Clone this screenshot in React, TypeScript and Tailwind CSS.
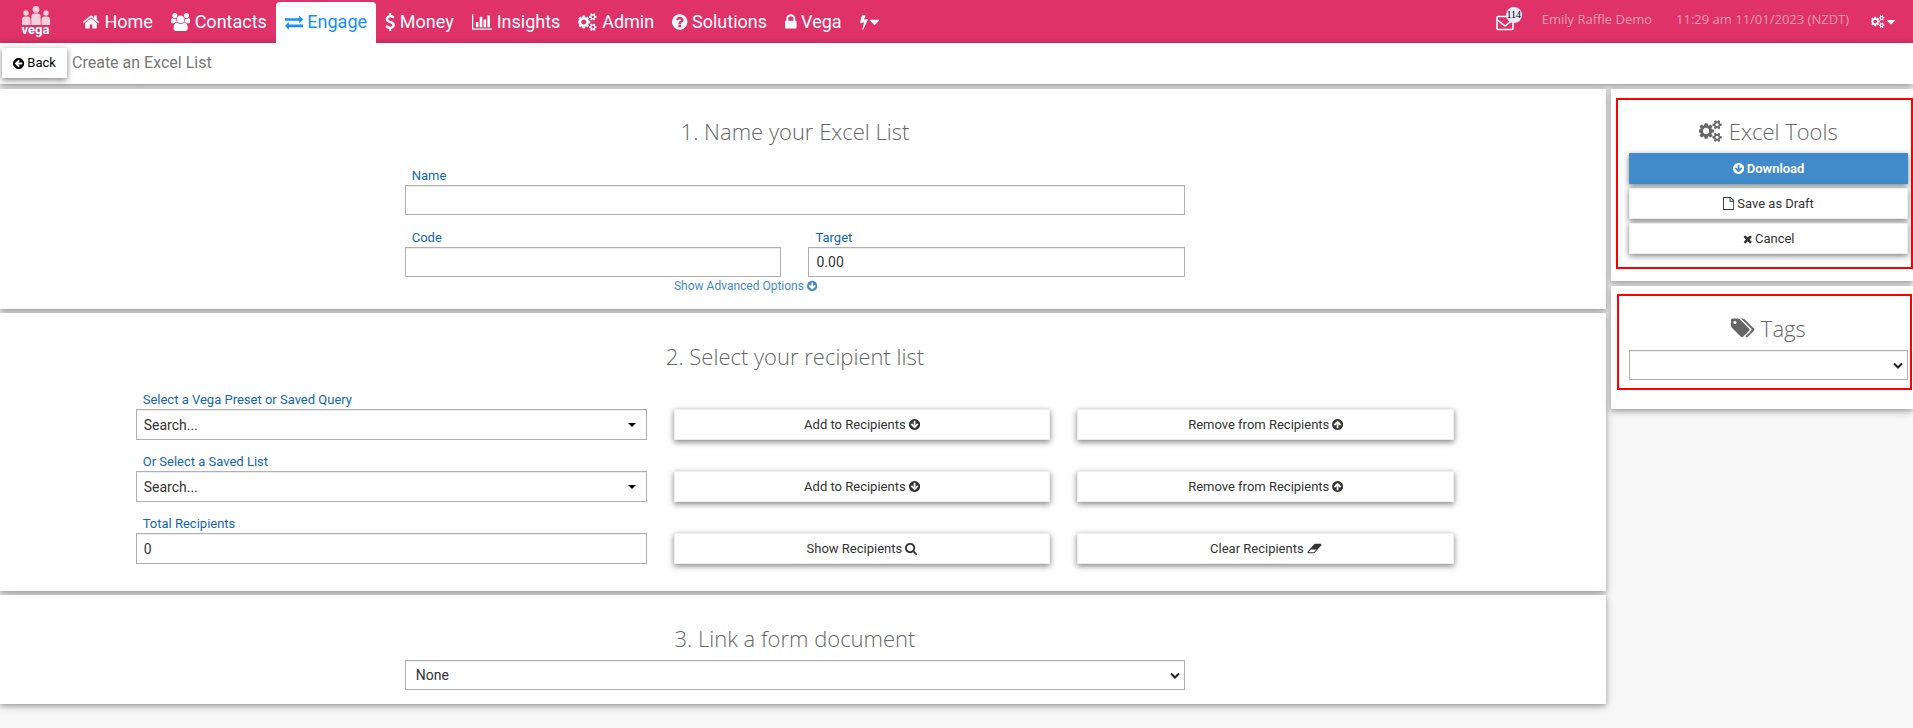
import React from "react";

type IconProps = { className?: string };

const icons = {
  home: { w: 1792, d: "M1472 992v480q0 26-19 45t-45 19h-384v-384h-256v384h-384q-26 0-45-19t-19-45v-480q0-1 .5-3t.5-3l575-474 575 474q1 2 1 6zm223-69l-62 74q-8 9-21 11h-3q-13 0-21-7l-692-577-692 577q-12 8-24 7-13-2-21-11l-62-74q-8-10-7-23.5t11-21.5l719-599q32-26 76-26t76 26l244 204v-195q0-14 9-23t23-9h192q14 0 23 9t9 23v408l219 182q10 8 11 21.5t-7 23.5z" },
  users: { x: -64, w: 1920, d: "M529 896q-162 5-265 128h-134q-82 0-138-40.5t-56-118.5q0-353 124-353 6 0 43.5 21t97.5 42.5 119 21.5q67 0 133-23-5 37-5 66 0 139 81 256zm1071 637q0 120-73 189.5t-194 69.5h-874q-121 0-194-69.5t-73-189.5q0-53 3.5-103.5t14-109 26.5-108.5 43-97.5 62-81 85.5-53.5 111.5-20q10 0 43 21.5t73 48 107 48 135 21.5 135-21.5 107-48 73-48 43-21.5q61 0 111.5 20t85.5 53.5 62 81 43 97.5 26.5 108.5 14 109 3.5 103.5zm-1024-1277q0 106-75 181t-181 75-181-75-75-181 75-181 181-75 181 75 75 181zm704 384q0 159-112.5 271.5t-271.5 112.5-271.5-112.5-112.5-271.5 112.5-271.5 271.5-112.5 271.5 112.5 112.5 271.5zm576 225q0 78-56 118.5t-138 40.5h-134q-103-123-265-128 81-117 81-256 0-29-5-66 66 23 133 23 59 0 119-21.5t97.5-42.5 43.5-21q124 0 124 353zm-128-609q0 106-75 181t-181 75-181-75-75-181 75-181 181-75 181 75 75 181z" },
  exchange: { w: 1792, d: "M1792 1184v192q0 13-9.5 22.5t-22.5 9.5h-1376v192q0 13-9.5 22.5t-22.5 9.5q-12 0-24-10l-319-320q-9-9-9-22 0-14 9-23l320-320q9-9 23-9 13 0 22.5 9.5t9.5 22.5v192h1376q13 0 22.5 9.5t9.5 22.5zm0-544q0 14-9 23l-320 320q-9 9-23 9-13 0-22.5-9.5t-9.5-22.5v-192h-1376q-13 0-22.5-9.5t-9.5-22.5v-192q0-13 9.5-22.5t22.5-9.5h1376v-192q0-14 9-23t23-9q12 0 24 10l319 319q9 9 9 23z" },
  dollar: { x: 384, w: 1024, d: "M1362 1185q0 153-99.5 263.5t-258.5 136.5v175q0 14-9 23t-23 9h-135q-13 0-22.5-9.5t-9.5-22.5v-175q-66-9-127.5-31t-101.5-44.5-74-48-46.5-37.5-17.5-18q-17-21-2-41l103-135q7-10 23-12 15-2 24 9l2 2q113 99 243 125 37 8 74 8 81 0 142.5-43t61.5-122q0-28-15-53t-33.5-42-58.5-37.5-66-32-80-32.5q-39-16-61.5-25t-61.5-26.5-62.5-31-56.5-35.5-53.5-42.5-43.5-49-35.5-58-21-66.5-8.5-78q0-138 98-242t255-134v-180q0-13 9.5-22.5t22.5-9.5h135q14 0 23 9t9 23v176q57 6 110.5 23t87 33.5 63.5 37.5 39 29 15 14q17 18 5 38l-81 146q-8 15-23 16-14 3-27-7-3-3-14.5-12t-39-26.5-58.5-32-74.5-26-85.5-11.5q-95 0-155 43t-60 111q0 26 8.5 48t29.5 41.5 39.5 33 56 31 60.5 27 70 27.5q53 20 81 31.5t76 35 75.5 42.5 62 50 53 63.5 31.5 76.5 13 94z" },
  chart: { w: 2048, d: "M640 896v512h-256v-512h256zm384-512v1024h-256v-1024h256zm1024 1152v128h-2048v-1536h128v1408h1920zm-640-896v768h-256v-768h256zm384-384v1152h-256v-1152h256z" },
  cogs: { w: 1920, d: "M832 896q0-106-75-181t-181-75-181 75-75 181 75 181 181 75 181-75 75-181zm768 512q0-52-38-90t-90-38-90 38-38 90q0 53 37.5 90.5t90.5 37.5 90.5-37.5 37.5-90.5zm0-1024q0-52-38-90t-90-38-90 38-38 90q0 53 37.5 90.5t90.5 37.5 90.5-37.5 37.5-90.5zm-384 421v185q0 10-7 19.5t-16 10.5l-155 24q-11 35-32 76 34 48 90 115 7 11 7 20 0 12-7 19-23 30-82.5 89.5t-78.5 59.5q-11 0-21-7l-115-90q-37 19-77 31-11 108-23 155-7 24-30 24h-186q-11 0-20-7.5t-10-17.5l-23-153q-34-10-75-31l-118 89q-7 7-20 7-11 0-21-8-144-133-144-160 0-9 7-19 10-14 41-53t47-61q-23-44-35-82l-152-24q-10-1-17-9.5t-7-19.5v-185q0-10 7-19.5t16-10.5l155-24q11-35 32-76-34-48-90-115-7-11-7-20 0-12 7-20 22-30 82-89t79-59q11 0 21 7l115 90q34-18 77-32 11-108 23-154 7-24 30-24h186q11 0 20 7.5t10 17.5l23 153q34 10 75 31l118-89q8-7 20-7 11 0 21 8 144 133 144 160 0 8-7 19-12 16-42 54t-45 60q23 48 34 82l152 23q10 2 17 10.5t7 19.5zm640 533v140q0 16-149 31-12 27-30 52 51 113 51 138 0 4-4 7-122 71-124 71-8 0-46-47t-52-68q-20 2-30 2t-30-2q-14 21-52 68t-46 47q-2 0-124-71-4-3-4-7 0-25 51-138-18-25-30-52-149-15-149-31v-140q0-16 149-31 13-29 30-52-51-113-51-138 0-4 4-7 4-2 35-20t59-34 30-16q8 0 46 46.5t52 67.5q20-2 30-2t30 2q51-71 92-112l6-2q4 0 124 70 4 3 4 7 0 25-51 138 17 23 30 52 149 15 149 31zm0-1024v140q0 16-149 31-12 27-30 52 51 113 51 138 0 4-4 7-122 71-124 71-8 0-46-47t-52-68q-20 2-30 2t-30-2q-14 21-52 68t-46 47q-2 0-124-71-4-3-4-7 0-25 51-138-18-25-30-52-149-15-149-31v-140q0-16 149-31 13-29 30-52-51-113-51-138 0-4 4-7 4-2 35-20t59-34 30-16q8 0 46 46.5t52 67.5q20-2 30-2t30 2q51-71 92-112l6-2q4 0 124 70 4 3 4 7 0 25-51 138 17 23 30 52 149 15 149 31z" },
  question: { x: 128, w: 1536, d: "M1024 1376v-192q0-14-9-23t-23-9h-192q-14 0-23 9t-9 23v192q0 14 9 23t23 9h192q14 0 23-9t9-23zm256-672q0-88-55.5-163t-138.5-116-170-41q-243 0-371 213-15 24 8 42l132 100q7 6 19 6 16 0 25-12 53-68 86-92 34-24 86-24 48 0 85.5 26t37.5 59q0 38-20 61t-68 45q-63 28-115.5 86.5t-52.5 125.5v36q0 14 9 23t23 9h192q14 0 23-9t9-23q0-19 21.5-49.5t54.5-49.5q32-18 49-28.5t46-35 44.5-48 28-60.5 12.5-81zm384 192q0 209-103 385.5t-279.5 279.5-385.5 103-385.5-103-279.5-279.5-103-385.5 103-385.5 279.5-279.5 385.5-103 385.5 103 279.5 279.5 103 385.5z" },
  lock: { x: 320, w: 1152, d: "M640 768h512v-192q0-106-75-181t-181-75-181 75-75 181v192zm832 96v576q0 40-28 68t-68 28h-960q-40 0-68-28t-28-68v-576q0-40 28-68t68-28h32v-192q0-184 132-316t316-132 316 132 132 316v192h32q40 0 68 28t28 68z" },
  bolt: { x: 448, w: 896, d: "M1333 566q18 20 7 44l-540 1157q-13 25-42 25-4 0-14-2-17-5-25.5-19t-4.5-30l197-808-406 101q-4 1-12 1-18 0-31-11-18-15-13-39l201-825q4-14 16-23t28-9h328q19 0 32 12.5t13 29.5q0 8-5 18l-171 463 396-98q8-2 12-2 19 0 34 15z" },
  caret: { x: 384, w: 1024, d: "M1408 704q0 26-19 45l-448 448q-19 19-45 19t-45-19l-448-448q-19-19-19-45t19-45 45-19h896q26 0 45 19t19 45z" },
  arrowDown: { x: 128, w: 1536, d: "M1412 897q0-27-18-45l-91-91q-18-18-45-18t-45 18l-189 189v-502q0-26-19-45t-45-19h-128q-26 0-45 19t-19 45v502l-189-189q-19-19-45-19t-45 19l-91 91q-18 18-18 45t18 45l362 362 91 91q18 18 45 18t45-18l91-91 362-362q18-18 18-45zm252-1q0 209-103 385.5t-279.5 279.5-385.5 103-385.5-103-279.5-279.5-103-385.5 103-385.5 279.5-279.5 385.5-103 385.5 103 279.5 279.5 103 385.5z" },
  times: { x: 192, w: 1408, d: "M1490 1322q0 40-28 68l-136 136q-28 28-68 28t-68-28l-294-294-294 294q-28 28-68 28t-68-28l-136-136q-28-28-28-68t28-68l294-294-294-294q-28-28-28-68t28-68l136-136q28-28 68-28t68 28l294 294 294-294q28-28 68-28t68 28l136 136q28 28 28 68t-28 68l-294 294 294 294q28 28 28 68z" },
  search: { x: 64, w: 1664, d: "M1216 832q0-185-131.5-316.5t-316.5-131.5-316.5 131.5-131.5 316.5 131.5 316.5 316.5 131.5 316.5-131.5 131.5-316.5zm512 832q0 52-38 90t-90 38q-54 0-90-38l-343-342q-179 124-399 124-143 0-273.5-55.5t-225-150-150-225-55.5-273.5 55.5-273.5 150-225 225-150 273.5-55.5 273.5 55.5 225 150 150 225 55.5 273.5q0 220-124 399l343 343q37 37 37 90z" },
  tags: { w: 1920, d: "M448 448q0-53-37.5-90.5t-90.5-37.5-90.5 37.5-37.5 90.5 37.5 90.5 90.5 37.5 90.5-37.5 37.5-90.5zm1067 576q0 53-37 90l-491 492q-39 37-91 37-53 0-90-37l-715-716q-38-37-64.5-101t-26.5-117v-416q0-52 38-90t90-38h416q53 0 117 26.5t102 64.5l715 714q37 39 37 91zm384 0q0 53-37 90l-491 492q-39 37-91 37-36 0-59-14t-53-45l470-470q37-37 37-90 0-52-37-91l-715-714q-38-38-102-64.5t-117-26.5h224q53 0 117 26.5t102 64.5l715 714q37 39 37 91z" },
  eraser: { w: 2048, d: "M960 1408l336-384h-768l-336 384h768zm1013-1077q15 34 9.5 71.5t-30.5 65.5l-896 1024q-38 44-96 44h-768q-38 0-69.5-20.5t-47.5-54.5q-15-34-9.5-71.5t30.5-65.5l896-1024q38-44 96-44h768q38 0 69.5 20.5t47.5 54.5z" },
  file: { x: 128, w: 1536, d: "M1596 380q28 28 48 76t20 88v1152q0 40-28 68t-68 28h-1344q-40 0-68-28t-28-68v-1600q0-40 28-68t68-28h896q40 0 88 20t76 48zm-444-244v376h376q-10-29-22-41l-313-313q-12-12-41-22zm384 1528v-1024h-416q-40 0-68-28t-28-68v-416h-768v1536h1280z" },
};

type IconName = keyof typeof icons;

function Icon({ name, className = "" }: IconProps & { name: IconName }) {
  const icon: { x?: number; w: number; d: string } = icons[name];
  return (
    <svg viewBox={`${icon.x ?? 0} 0 ${icon.w} 1792`} fill="currentColor" aria-hidden="true" className={`w-auto shrink-0 ${className}`}>
      <path d={icon.d} />
    </svg>
  );
}

function Logo() {
  return (
    <a href="#" aria-label="vega" className="flex w-8 flex-col items-center text-white">
      <svg viewBox="0 0 28 19" className="h-[19px] w-7" fill="#f8cfdc" aria-hidden="true">
        <circle cx="14" cy="3.4" r="3.4" />
        <circle cx="4" cy="7" r="2.7" />
        <circle cx="24" cy="7" r="2.7" />
        <path d="M9.300 19v-8q0-3.500 3-3.500h3.400q3 0 3 3.500v8z" />
        <path d="M0 19v-5q0-3.500 3-3.500h2.500q3 0 3 3.500v5z" />
        <path d="M19.500 19v-5q0-3.500 3-3.500h2.500q3 0 3 3.500v5z" />
      </svg>
      <span className="text-[13px] leading-[9px] font-bold">vega</span>
    </a>
  );
}

const navItems: { label: string; icon: IconName; active?: boolean }[] = [
  { label: "Home", icon: "home" },
  { label: "Contacts", icon: "users" },
  { label: "Engage", icon: "exchange", active: true },
  { label: "Money", icon: "dollar" },
  { label: "Insights", icon: "chart" },
  { label: "Admin", icon: "cogs" },
  { label: "Solutions", icon: "question" },
  { label: "Vega", icon: "lock" },
];

function Header() {
  return (
    <header className="flex h-[43px] items-end bg-[#de3268] text-white">
      <div className="flex h-full w-[71px] shrink-0 justify-center pt-[6px]">
        <Logo />
      </div>
      <nav className="flex pl-[2px] text-lg">
        {navItems.map((item) => (
          <a
            key={item.label}
            href="#"
            className={
              item.active
                ? "flex h-[41px] items-center rounded-t bg-white px-[9px] pb-[2px] text-[#1590f5]"
                : "flex h-[41px] items-center px-[9px] pb-[2px]"
            }
          >
            <Icon name={item.icon} className="h-[18px]" />
            <span className="whitespace-pre">{" " + item.label}</span>
          </a>
        ))}
        <button type="button" aria-label="Quick actions" className="flex h-[41px] items-center gap-[2px] px-[9px] pb-[2px]">
          <Icon name="bolt" className="h-4" />
          <Icon name="caret" className="h-4" />
        </button>
      </nav>
      <div className="ml-auto flex h-full items-center pr-[18px] font-['Open_Sans',sans-serif] text-[13px] text-[#f29ab5]">
        <a href="#" aria-label="Messages" className="relative mt-[2px] mr-7 text-white">
          <svg viewBox="0 0 18 16" className="h-4 w-[18px]" fill="none" stroke="currentColor" strokeWidth="1.600" aria-hidden="true">
            <rect x="1" y="1.500" width="16" height="13" rx="1" />
            <path d="M1.500 5 8 10.300q1 .7 2 0L16.500 5" />
          </svg>
          <span className="absolute -top-2 left-[10px] flex size-4 items-center justify-center rounded-full bg-[#e8eaf6] font-['Liberation_Serif',serif] text-[10px] text-black">114</span>
        </a>
        <span className="mr-6 pb-1">Emily Raffle Demo</span>
        <span className="mr-[22px] pb-1">11:29 am 11/01/2023 (NZDT)</span>
        <button type="button" aria-label="Settings" className="flex items-center gap-[2px] text-white">
          <Icon name="cogs" className="h-[13px]" />
          <Icon name="caret" className="h-[14px]" />
        </button>
      </div>
    </header>
  );
}

const card = "bg-white shadow-[0_2px_5px_rgba(0,0,0,0.26),0_2px_10px_rgba(0,0,0,0.18)]";
const control =
  "block h-[30px] w-full appearance-none border border-[#aeb0b2] bg-white px-[7px] text-sm text-[#333] shadow-[inset_0_1px_1px_rgba(0,0,0,0.08)]";
const heading = "font-['Open_Sans',sans-serif] text-[22px] leading-6 font-light text-[#666]";
const labelStyle = "block pt-[2px] pl-[7px] text-[13px] leading-[18px] text-[#1268b0]";
const button =
  "flex h-[31px] w-full items-center justify-center gap-[3px] border text-[13px] shadow-[0_2px_6px_rgba(0,0,0,0.5)]";
const plainButton = "border-[#eee] bg-white text-[#333]";

function Field({ id, label, children }: { id: string; label: string; children: React.ReactNode }) {
  return (
    <div>
      <label htmlFor={id} className={labelStyle}>{label}</label>
      {children}
    </div>
  );
}

function NativeSelect({ id, label, option }: { id: string; label: string; option: string }) {
  return (
    <div className="relative">
      <select id={id} aria-label={label} className={`${control} pl-[10px]`}>
        <option>{option}</option>
      </select>
      <svg viewBox="0 0 10 8" className="pointer-events-none absolute top-3 right-[5px] h-2 w-[10px]" fill="none" stroke="#222" strokeWidth="2" aria-hidden="true">
        <path d="M1 1.500 5 5.500 9 1.500" />
      </svg>
    </div>
  );
}

function SearchSelect({ id }: { id: string }) {
  return (
    <div className="relative">
      <select id={id} className={`${control} h-[31px]`}>
        <option>Search...</option>
      </select>
      <svg viewBox="0 0 8 4" className="pointer-events-none absolute top-[14px] right-[11px] h-1 w-2" fill="#000" aria-hidden="true">
        <path d="M0 0h8L4 4z" />
      </svg>
    </div>
  );
}

function ActionButton({ label, icon, iconClass }: { label: string; icon: IconName; iconClass: string }) {
  return (
    <button type="button" className={`${button} ${plainButton}`}>
      {label}
      <Icon name={icon} className={iconClass} />
    </button>
  );
}

export default function App() {
  return (
    <div className="min-h-screen bg-[#f8f8f8] font-[Roboto,sans-serif] text-[#333]">
      <Header />
      <div className={`${card} flex h-[41px] items-center pb-px pl-[2px]`}>
        <button type="button" className="flex h-[30px] w-[65px] items-center justify-center gap-[3px] bg-white text-[13px] text-black shadow-[0_2px_6px_rgba(0,0,0,0.5)]">
          <Icon name="arrowDown" className="h-[13px] rotate-90" />
          Back
        </button>
        <h1 className="pl-[5px] text-base text-[#777]">Create an Excel List</h1>
      </div>

      <div className="flex items-start gap-[5px] pt-[5px]">
        <main className="flex min-w-0 flex-1 flex-col gap-1">
          <section className={`${card} pt-[30px] pr-[26.200%] pb-[14px] pl-[25.200%]`}>
            <h2 className={`${heading} mb-[22px] text-center`}>1. Name your Excel List</h2>
            <Field id="name" label="Name">
              <input id="name" type="text" className={control} />
            </Field>
            <div className="mt-3 grid grid-cols-2 gap-[27px]">
              <Field id="code" label="Code">
                <input id="code" type="text" className={control} />
              </Field>
              <Field id="target" label="Target">
                <input id="target" type="text" defaultValue="0.00" className={control} />
              </Field>
            </div>
            <a href="#" className="ml-[34.500%] flex w-fit items-center gap-[3px] text-xs leading-[18px] text-[#428bca]">
              Show Advanced Options
              <Icon name="arrowDown" className="h-3" />
            </a>
          </section>

          <section className={`${card} pt-[31px] pb-[27px]`}>
            <h2 className={`${heading} mb-[21px] pr-4 text-center`}>2. Select your recipient list</h2>
            <div className="ml-[8.450%] grid w-[82.100%] grid-cols-[511fr_377fr_377fr] items-end gap-x-[27px] gap-y-[11px]">
              <Field id="query" label="Select a Vega Preset or Saved Query">
                <SearchSelect id="query" />
              </Field>
              <ActionButton label="Add to Recipients" icon="arrowDown" iconClass="h-[13px]" />
              <ActionButton label="Remove from Recipients" icon="arrowDown" iconClass="h-[13px] rotate-180" />
              <Field id="list" label="Or Select a Saved List">
                <SearchSelect id="list" />
              </Field>
              <ActionButton label="Add to Recipients" icon="arrowDown" iconClass="h-[13px]" />
              <ActionButton label="Remove from Recipients" icon="arrowDown" iconClass="h-[13px] rotate-180" />
              <Field id="total" label="Total Recipients">
                <input id="total" type="text" defaultValue="0" className={`${control} h-[31px]`} />
              </Field>
              <ActionButton label="Show Recipients" icon="search" iconClass="h-[13px]" />
              <ActionButton label="Clear Recipients" icon="eraser" iconClass="h-[13px]" />
            </div>
          </section>

          <section className={`${card} pt-[31px] pr-[26.200%] pb-[14px] pl-[25.200%]`}>
            <h2 className={`${heading} mb-[10px] text-center`}>3. Link a form document</h2>
            <NativeSelect id="document" label="Form document" option="None" />
          </section>
        </main>

        <aside className="flex w-[302px] shrink-0 flex-col gap-[5px]">
          <section className={`${card} pt-[9px] pb-3 pl-[5px]`}>
            <div className="border-2 border-[#f00] pt-[19px] pr-[3px] pb-[13px] pl-[11px]">
              <h2 className={`${heading} mb-[10px] flex items-center justify-center gap-[6px]`}>
                <Icon name="cogs" className="h-[22px]" />
                Excel Tools
              </h2>
              <div className="flex flex-col gap-1">
                <button type="button" className={`${button} border-[#428bca] bg-[#428bca] font-semibold text-white`}>
                  <Icon name="arrowDown" className="h-[13px]" />
                  Download
                </button>
                <button type="button" className={`${button} ${plainButton}`}>
                  <Icon name="file" className="h-[13px]" />
                  Save as Draft
                </button>
                <button type="button" className={`${button} ${plainButton}`}>
                  <Icon name="times" className="h-3" />
                  Cancel
                </button>
              </div>
            </div>
          </section>
          <section className={`${card} pt-2 pr-px pb-[19px] pl-[6px]`}>
            <div className="border-2 border-[#f00] pt-5 pr-[2px] pb-2 pl-[10px]">
              <h2 className={`${heading} mb-[10px] flex items-center justify-center gap-[6px]`}>
                <Icon name="tags" className="h-[22px]" />
                Tags
              </h2>
              <NativeSelect id="tags" label="Tags" option="" />
            </div>
          </section>
        </aside>
      </div>
    </div>
  );
}
